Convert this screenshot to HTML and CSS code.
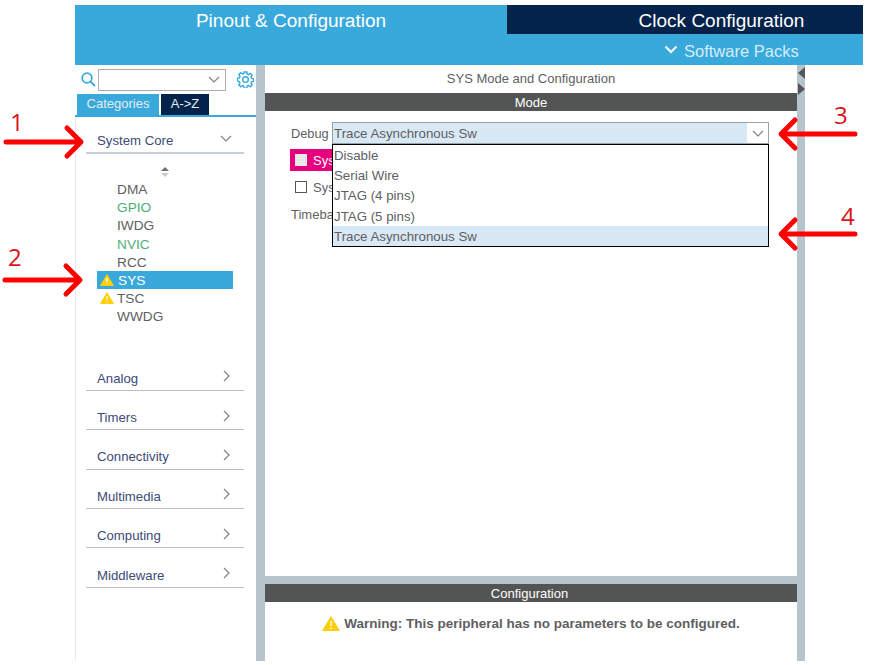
FILE: index.html
```html
<!DOCTYPE html>
<html lang="en">

<head>
    <meta charset="UTF-8">
    <meta name="viewport" content="width=device-width, initial-scale=1.0">
    <title>SYS Mode and Configuration</title>
    <link rel="stylesheet" href="styles.css">
</head>

<body>
    <div class="app">
        <div class="top-tabs">
            <div class="top-tab pinout">Pinout &amp; Configuration</div>
            <div class="top-tab clock">Clock Configuration</div>
        </div>
        <div class="sub-bar">
            <svg class="packs-chevron" width="14" height="9" viewBox="0 0 14 9"><path d="M1.5 1.5 7 7l5.500-5.500" /></svg>
            <span>Software Packs</span>
        </div>

        <div class="main">
            <aside class="sidebar">
                <div class="search-row">
                    <svg class="search-icon" width="15" height="15" viewBox="0 0 15 15"><circle cx="6" cy="6" r="4.800" /><path d="m9.500 9.500 4.500 4.500" /></svg>
                    <div class="search-box">
                        <svg class="chevron" width="12" height="7" viewBox="0 0 12 7"><path d="M1 1l5 5 5-5" /></svg>
                    </div>
                    <svg class="gear-icon" width="17" height="17" viewBox="0 0 18 18">
                        <circle cx="9" cy="9" r="3" />
                        <path d="M7.600 1h2.800l.4 2.200 1.500.6 1.800-1.300 2 2-1.300 1.800.6 1.500 2.100.4v2.800l-2.100.4-.6 1.500 1.300 1.800-2 2-1.800-1.300-1.500.6-.4 2.100H7.600l-.4-2.100-1.500-.6-1.800 1.300-2-2 1.300-1.800-.6-1.500L.5 10.400V7.600l2.100-.4.6-1.500-1.300-1.800 2-2 1.800 1.300 1.500-.6z" />
                    </svg>
                </div>
                <div class="view-tabs">
                    <div class="view-tab active">Categories</div>
                    <div class="view-tab">A-&gt;Z</div>
                </div>

                <div class="tree">
                    <div class="group open">
                        <span>System Core</span>
                        <svg class="chevron" width="12" height="7" viewBox="0 0 12 7"><path d="M1 1l5 5 5-5" /></svg>
                    </div>
                    <div class="sort-arrows"><span class="up"></span><span class="down"></span></div>
                    <ul class="peripherals">
                        <li>DMA</li>
                        <li class="ok">GPIO</li>
                        <li>IWDG</li>
                        <li class="ok">NVIC</li>
                        <li>RCC</li>
                        <li class="selected">
                            <svg class="warn" width="14" height="12" viewBox="0 0 14 12"><path d="M7 .8 13.400 11.400H.6z" /><path class="mark" d="M7 4v4M7 9.200v1.100" /></svg>
                            SYS
                        </li>
                        <li>
                            <svg class="warn" width="14" height="12" viewBox="0 0 14 12"><path d="M7 .8 13.400 11.400H.6z" /><path class="mark" d="M7 4v4M7 9.200v1.100" /></svg>
                            TSC
                        </li>
                        <li>WWDG</li>
                    </ul>
                    <div class="group">
                        <span>Analog</span>
                        <svg class="chevron" width="7" height="12" viewBox="0 0 7 12"><path d="M1 1l5 5-5 5" /></svg>
                    </div>
                    <div class="group">
                        <span>Timers</span>
                        <svg class="chevron" width="7" height="12" viewBox="0 0 7 12"><path d="M1 1l5 5-5 5" /></svg>
                    </div>
                    <div class="group">
                        <span>Connectivity</span>
                        <svg class="chevron" width="7" height="12" viewBox="0 0 7 12"><path d="M1 1l5 5-5 5" /></svg>
                    </div>
                    <div class="group">
                        <span>Multimedia</span>
                        <svg class="chevron" width="7" height="12" viewBox="0 0 7 12"><path d="M1 1l5 5-5 5" /></svg>
                    </div>
                    <div class="group">
                        <span>Computing</span>
                        <svg class="chevron" width="7" height="12" viewBox="0 0 7 12"><path d="M1 1l5 5-5 5" /></svg>
                    </div>
                    <div class="group">
                        <span>Middleware</span>
                        <svg class="chevron" width="7" height="12" viewBox="0 0 7 12"><path d="M1 1l5 5-5 5" /></svg>
                    </div>
                </div>
            </aside>

            <section class="panel">
                <div class="mode-area">
                    <div class="panel-title">SYS Mode and Configuration</div>
                    <div class="bar">Mode</div>
                    <div class="mode-form">
                        <div class="debug-row">
                            <span class="field-label">Debug</span>
                            <div class="select">
                                <span class="select-value">Trace Asynchronous Sw</span>
                                <div class="select-button">
                                    <svg class="chevron" width="12" height="7" viewBox="0 0 12 7"><path d="M1 1l5 5 5-5" /></svg>
                                </div>
                            </div>
                        </div>
                        <div class="check-row warning"><span class="checkbox"></span>Sys</div>
                        <div class="check-row"><span class="checkbox"></span>Sys</div>
                        <div class="field-label timebase">Timeba</div>

                        <ul class="dropdown">
                            <li>Disable</li>
                            <li>Serial Wire</li>
                            <li>JTAG (4 pins)</li>
                            <li>JTAG (5 pins)</li>
                            <li class="current">Trace Asynchronous Sw</li>
                        </ul>
                    </div>
                </div>
                <div class="config-area">
                    <div class="bar config-bar">Configuration</div>
                    <div class="config-warning">
                        <svg class="warn" width="18" height="15" viewBox="0 0 14 12"><path d="M7 .8 13.400 11.400H.6z" /><path class="mark" d="M7 4v4M7 9.200v1.100" /></svg>
                        Warning: This peripheral has no parameters to be configured.
                    </div>
                </div>
            </section>

            <div class="collapse-strip">
                <span class="tri left"></span>
                <span class="tri right"></span>
            </div>
        </div>
    </div>

    <!-- annotations drawn over the screenshot -->
    <svg class="arrows" width="873" height="665" viewBox="0 0 873 665">
        <path d="M6 142H80M67 128l14 14-14 14" />
        <path d="M5 280H79M66 266l14 14-14 14" />
        <path d="M855 134H782M795 120l-14 14 14 14" />
        <path d="M855 234H782M795 220l-14 14 14 14" />
    </svg>
    <span class="note n1">1</span>
    <span class="note n2">2</span>
    <span class="note n3">3</span>
    <span class="note n4">4</span>
</body>

</html>
```

FILE: styles.css
```css
body {
    margin: 0;
    width: 873px;
    height: 665px;
    position: relative;
    overflow: hidden;
    background: #fff;
    font-family: "Liberation Sans", Arial, sans-serif;
    font-size: 13px;
    color: #5e5f63;
}

ul {
    list-style: none;
    margin: 0;
    padding: 0;
}

.app {
    width: 788px;
    margin: 5px 0 0 75px;
}

.top-tabs {
    display: flex;
    height: 29px;
}

.top-tab {
    display: flex;
    align-items: center;
    justify-content: center;
    color: #fff;
    font-size: 19px;
    padding-top: 2px;
}

.pinout {
    width: 432px;
    background: #39a9dc;
}

.clock {
    flex: 1;
    background: #03234b;
    padding-left: 73px;
}

.sub-bar {
    height: 31px;
    background: #39a9dc;
    color: #d4edf8;
    font-size: 16.500px;
    display: flex;
    align-items: center;
    gap: 6px;
    padding-left: 589px;
}

.sub-bar span {
    margin-top: 3px;
}

.packs-chevron {
    fill: none;
    stroke: #fff;
    stroke-width: 2;
}

.main {
    display: flex;
    height: 596px;
}

.chevron {
    fill: none;
    stroke: #7d8488;
    stroke-width: 1.200;
}

/* left column */

.sidebar {
    width: 181px;
    flex: none;
}

.search-row {
    display: flex;
    align-items: center;
    height: 29px;
    padding-left: 6px;
}

.search-icon {
    fill: none;
    stroke: #39a9dc;
    stroke-width: 1.800;
    margin-right: 2px;
}

.search-box {
    width: 121px;
    height: 20px;
    border: 1px solid #a9adb0;
    display: flex;
    align-items: center;
    justify-content: flex-end;
    padding-right: 5px;
}

.gear-icon {
    fill: none;
    stroke: #39a9dc;
    stroke-width: 1.500;
    margin-left: 11px;
}

.view-tabs {
    display: flex;
    gap: 2px;
    height: 21px;
    padding-left: 2px;
    border-bottom: 2px solid #39a9dc;
}

.view-tab {
    width: 48px;
    background: #03234b;
    color: #e4edf3;
    font-size: 13px;
    text-align: center;
    line-height: 20px;
}

.view-tab.active {
    width: 82px;
    background: #39a9dc;
}

.tree {
    height: 544px;
    border-left: 1px solid #e6ebee;
    padding: 0 12px 0 10px;
}

.group {
    display: flex;
    justify-content: space-between;
    align-items: center;
    height: 38.400px;
    border-bottom: 1px solid #b9c1c6;
    padding: 0 11px;
    color: #3c4a78;
    font-size: 13.200px;
}

.group span {
    margin-top: 15px;
}

.group .chevron {
    margin-top: 11px;
    margin-right: 3px;
}

.group.open {
    height: 35px;
    border-bottom: 2px solid #c9d0d4;
}

.group.open span {
    margin-top: 11px;
}

.group.open .chevron {
    margin-top: 7px;
    margin-right: 1px;
}

.sort-arrows {
    display: flex;
    flex-direction: column;
    align-items: center;
    gap: 2px;
    padding: 13px 0 1px 0;
    margin-left: -1px;
}

.sort-arrows span {
    width: 0;
    height: 0;
    border-left: 4px solid transparent;
    border-right: 4px solid transparent;
}

.sort-arrows .up {
    border-bottom: 4px solid #6e7378;
}

.sort-arrows .down {
    border-top: 4px solid #c9ccce;
}

.peripherals {
    padding: 2px 0 26px 11px;
    width: 136px;
}

.peripherals li {
    position: relative;
    height: 18.200px;
    line-height: 20px;
    padding-left: 20px;
    font-size: 13.700px;
}

.peripherals .ok {
    color: #4fae78;
}

.peripherals .selected {
    background: #39a9dc;
    color: #fff;
    padding-left: 21px;
}

.peripherals .warn {
    position: absolute;
    left: 3px;
    top: 3px;
}

.warn {
    fill: #fdcf08;
    stroke: #fdcf08;
    stroke-linejoin: round;
    stroke-width: 1;
}

.warn .mark {
    fill: none;
    stroke: #fff;
    stroke-width: 1.200;
}

/* centre panel */

.panel {
    width: 532px;
    flex: none;
    margin-left: 9px;
    background: #b6c4cc;
    box-shadow: -9px 0 0 #b6c4cc;
    display: flex;
    flex-direction: column;
    gap: 8px;
    height: 596px;
}

.mode-area {
    height: 511px;
    background: #fff;
}

.panel-title {
    height: 28px;
    line-height: 28px;
    text-align: center;
    font-size: 13px;
}

.bar {
    height: 18px;
    line-height: 20px;
    background: #535554;
    color: #fff;
    text-align: center;
    font-size: 13px;
}

.config-bar {
    padding-right: 3px;
}

.mode-form {
    position: relative;
    padding: 11px 0 0 26px;
}

.debug-row {
    display: flex;
    align-items: center;
    height: 22px;
}

.field-label {
    width: 41px;
    font-size: 12.800px;
}

.select {
    width: 435px;
    height: 20px;
    border: 1px solid #9aa1a5;
    background: #d9e8f5;
    display: flex;
    justify-content: space-between;
    align-items: center;
}

.select-value {
    padding-left: 1px;
    font-size: 13.300px;
}

.select-button {
    width: 21px;
    height: 20px;
    background: #fff;
    display: flex;
    align-items: center;
    justify-content: center;
}

.check-row {
    display: flex;
    align-items: center;
    gap: 6px;
    width: 42px;
    height: 22px;
    font-size: 13px;
    padding-left: 5px;
    box-sizing: border-box;
    margin-top: 5px;
    margin-left: -1px;
}

.check-row.warning {
    background: #e6007e;
    color: #fff;
}

.check-row.warning .checkbox {
    background: #e8e8e8;
    border-color: #e8e8e8;
}

.checkbox {
    flex: none;
    width: 10px;
    height: 10px;
    border: 1px solid #55565a;
    background: #fff;
}

.timebase {
    margin-top: 9px;
    font-size: 13px;
}

/* open list of the debug select */

.dropdown {
    position: absolute;
    left: 67px;
    top: 33px;
    width: 435px;
    height: 101px;
    border: 1px solid #000;
    background: #fff;
}

.dropdown li {
    height: 20.200px;
    line-height: 21px;
    padding-left: 1px;
    font-size: 13.300px;
}

.dropdown .current {
    background: #d9e8f5;
}

.config-area {
    flex: 1;
    background: #fff;
}

.config-warning {
    display: flex;
    align-items: center;
    justify-content: center;
    gap: 4px;
    height: 43px;
    font-size: 13.500px;
    font-weight: bold;
}

/* strip at the right of the panel */

.collapse-strip {
    width: 8px;
    background: #b6c4cc;
    position: relative;
}

.tri {
    position: absolute;
    width: 0;
    height: 0;
    border-top: 6px solid transparent;
    border-bottom: 6px solid transparent;
}

.tri.left {
    top: 2px;
    left: 1px;
    border-right: 7px solid #55565a;
}

.tri.right {
    top: 18px;
    left: 1px;
    border-left: 7px solid #55565a;
}

/* red annotations */

.arrows {
    position: absolute;
    left: 0;
    top: 0;
    fill: none;
    stroke: #ff0000;
    stroke-width: 5;
    stroke-linecap: round;
    stroke-linejoin: round;
}

.note {
    position: absolute;
    color: #d8141a;
    font-family: "Open Sans", sans-serif;
    font-size: 24px;
    line-height: 28px;
}

.n1 { left: 10px; top: 108px; }
.n2 { left: 8px; top: 243px; }
.n3 { left: 834px; top: 101px; }
.n4 { left: 841px; top: 202px; }
```
